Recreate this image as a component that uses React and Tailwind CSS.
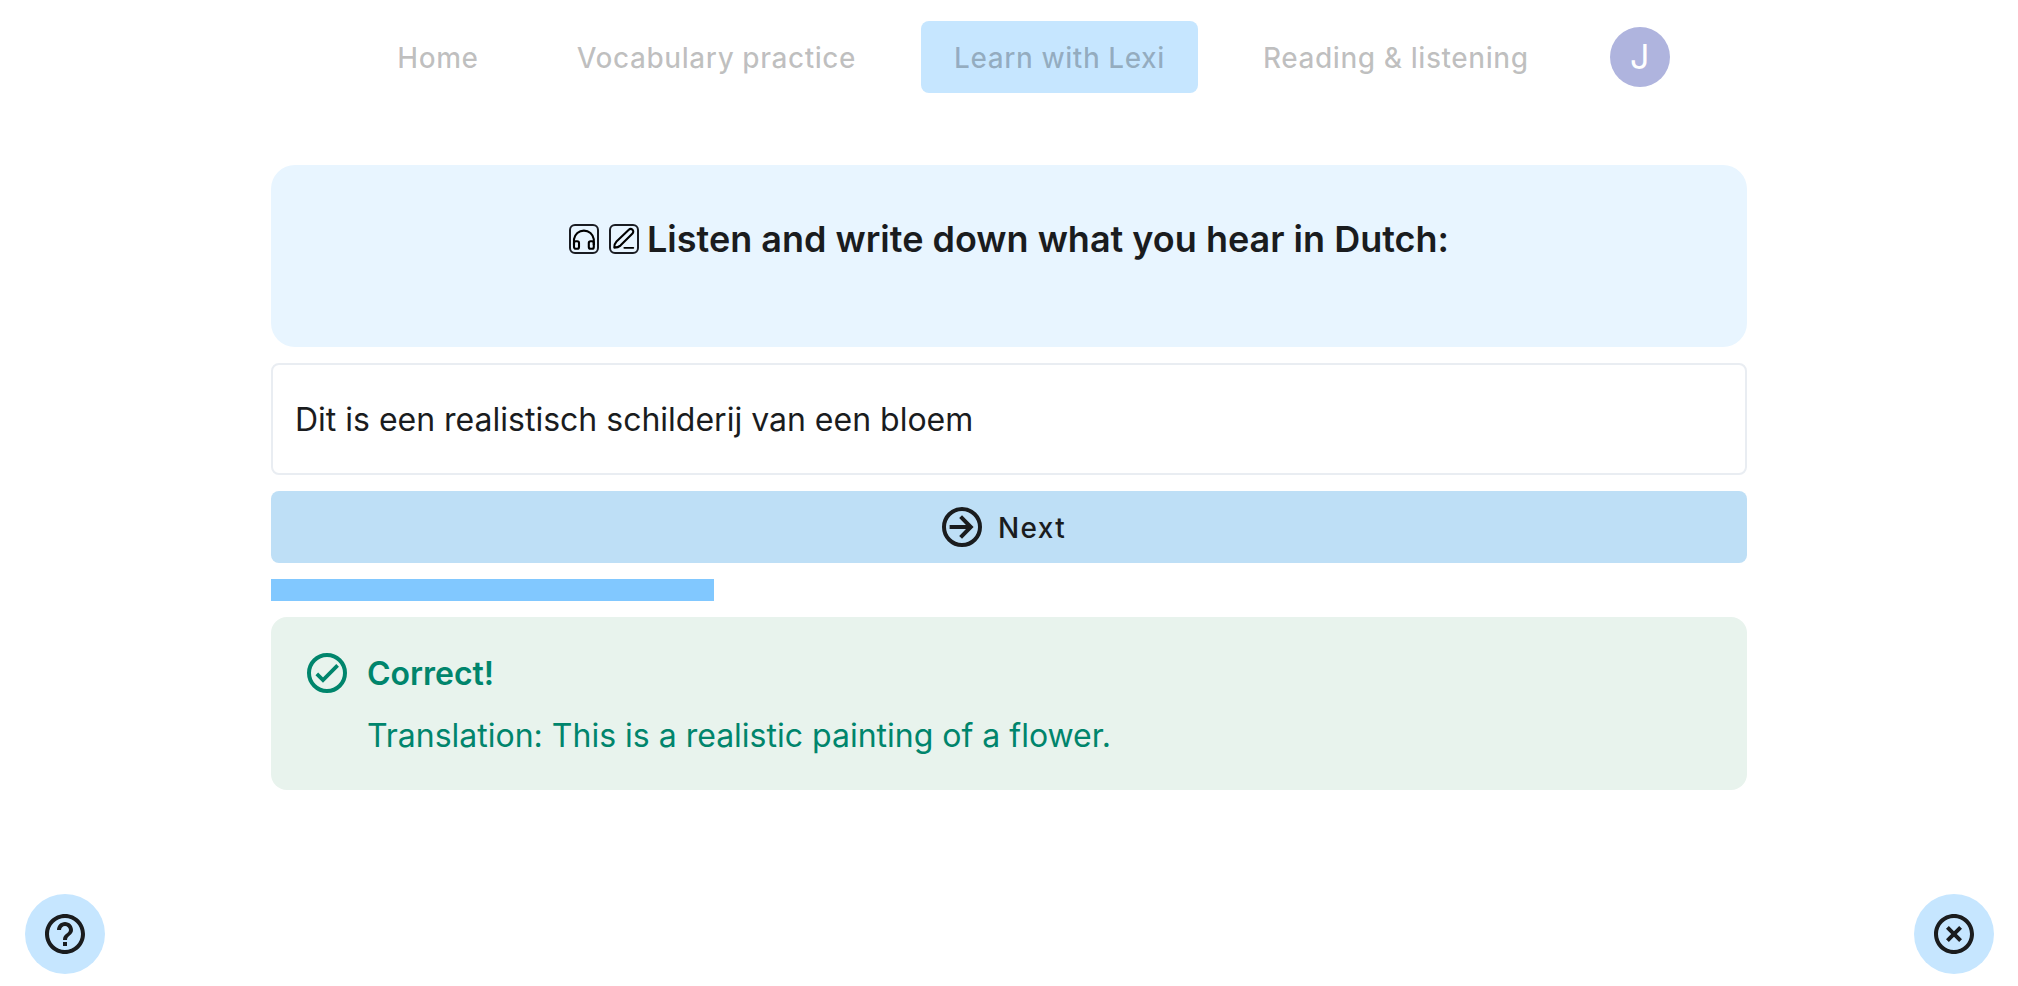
import { useState } from 'react';
import { MdHelpOutline, MdHighlightOff } from 'react-icons/md';

const links = [
  { name: 'Home', href: '#home' },
  { name: 'Vocabulary practice', href: '#vocabulary' },
  { name: 'Learn with Lexi', href: '#lexi', active: true },
  { name: 'Reading & listening', href: '#reading' },
];

function HeadphonesIcon() {
  return (
    <svg className="size-[30px]" viewBox="0 0 30 30" fill="none" stroke="#000" strokeWidth="2.1" aria-hidden="true">
      <rect x="1" y="1" width="28" height="28" rx="5" stroke="#1a1c22" strokeWidth="2" />
      <path d="M5 21V15.2a10 10 0 0 1 19.8 0V21" />
      <rect x="5" y="17.2" width="5" height="7.6" rx="1.8" />
      <rect x="19.8" y="17.2" width="5" height="7.6" rx="1.8" />
    </svg>
  );
}

function PencilIcon() {
  return (
    <svg className="size-[30px]" viewBox="0 0 30 30" fill="none" stroke="#000" strokeWidth="2.1" strokeLinejoin="round" strokeLinecap="round" aria-hidden="true">
      <rect x="1" y="1" width="28" height="28" rx="5" stroke="#1a1c22" strokeWidth="2" />
      <path d="M5.3 23.6q0-4 2.2-6.2L19.8 5.7a2.5 2.5 0 0 1 3.7 3.7L11.4 21.6q-2.2 2-6.1 2z" />
      <path d="M15.3 23.8H24.3" strokeWidth="1.8" />
    </svg>
  );
}

function ArrowCircleIcon() {
  return (
    <svg className="size-12" viewBox="0 0 24 24" fill="none" stroke="currentColor" strokeWidth="2" aria-hidden="true">
      <circle cx="12" cy="12" r="9" />
      <path d="M5.8 12H16" />
      <path d="M11.3 6.8l5.1 5.2-5.1 5.2" />
    </svg>
  );
}

function CheckCircleIcon() {
  return (
    <svg className="size-12 shrink-0" viewBox="0 0 24 24" fill="none" stroke="currentColor" strokeWidth="2" aria-hidden="true">
      <circle cx="12" cy="12" r="9" />
      <path d="M6.9 12.4l3.1 3.1 7.3-7.3" strokeWidth="1.9" />
    </svg>
  );
}

export default function App() {
  const [answer, setAnswer] = useState('Dit is een realistisch schilderij van een bloem');
  const progress = 30;

  return (
    <div className="min-h-screen bg-white font-['Inter',sans-serif] text-[#1a1c1e]">
      <nav className="flex items-center justify-center gap-8 pt-[21px] pl-4">
        {links.map(link => (
          <a
            key={link.name}
            href={link.href}
            className={`flex h-[72px] items-center rounded-lg px-[33px] pt-0.5 text-[28px] font-medium tracking-[0.02em] whitespace-nowrap text-black/25 ${link.active ? 'bg-[#c6e6ff]' : ''}`}
          >
            {link.name}
          </a>
        ))}
        <button className="ml-4 size-[60px] rounded-full bg-[#afb4de] text-[34px] leading-none text-white">J</button>
      </nav>

      <main className="mx-auto mt-[72px] flex w-[73.15%] flex-col gap-4">
        <section className="h-[182px] rounded-3xl bg-[#e8f5ff] pt-[50px]">
          <h1 className="flex items-center justify-center text-[36px] leading-[48px] font-semibold">
            <HeadphonesIcon />
            <span className="mr-2 ml-2.5"><PencilIcon /></span>
            Listen and write down what you hear in Dutch:
          </h1>
        </section>

        <input
          aria-label="Your answer"
          value={answer}
          onChange={e => setAnswer(e.target.value)}
          className="h-28 w-full rounded-lg border-2 border-[#e9edf2] bg-white px-[22px] text-[32px] outline-none"
        />

        <button className="flex h-[72px] w-full items-center justify-center gap-3 rounded-lg bg-[#bedff6] pr-3.5 text-[28px] font-medium tracking-wider">
          <ArrowCircleIcon />
          <span className="pt-0.5">Next</span>
        </button>

        <div className="h-[22px]" role="progressbar" aria-label="Progress" aria-valuenow={progress}>
          <div className="h-full bg-[#81c8ff]" style={{ width: `${progress}%` }} />
        </div>

        <section className="flex gap-4 rounded-2xl bg-[#e8f3ed] px-8 pt-8 pb-[30px] text-[32px] leading-[48px] text-[#00856c]">
          <CheckCircleIcon />
          <div className="pt-px">
            <h2 className="font-semibold">Correct!</h2>
            <p className="mt-3.5">Translation: This is a realistic painting of a flower.</p>
          </div>
        </section>
      </main>

      <button aria-label="Help" className="fixed bottom-3 left-[25px] flex size-20 items-center justify-center rounded-full bg-[#c6e6ff]">
        <MdHelpOutline className="size-12" />
      </button>
      <button aria-label="Close" className="fixed right-6 bottom-3 flex size-20 items-center justify-center rounded-full bg-[#c6e6ff]">
        <MdHighlightOff className="size-12" />
      </button>
    </div>
  );
}
